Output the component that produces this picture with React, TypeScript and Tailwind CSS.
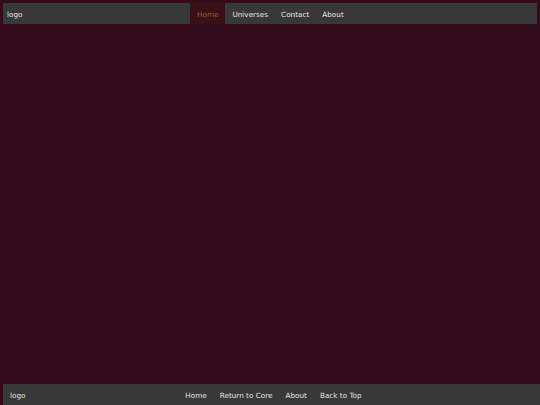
import React from 'react';

const font = { fontFamily: '"DejaVu Sans", Verdana, sans-serif' };

const topLinks = ['Universes', 'Contact', 'About'];
const footLinks = ['Home', 'Return to Core', 'About', 'Back to Top'];

export default function App() {
  return (
    <div
      className="min-h-screen h-[405px] flex flex-col bg-[#330c1c] text-[#e4e4e4] text-[7.25px] leading-none"
      style={font}
    >
      {/* Header */}
      <header className="flex mt-[3px] mx-[3px] h-[21px]">
        <div className="w-[187px] bg-[#383838] flex items-center pl-[4px] pt-[2px]">logo</div>
        <a className="flex items-center px-[7px] pt-[2px] bg-[#3a0f18] text-[#915f2e]">Home</a>
        <nav className="flex-1 flex items-center pt-[2px] pl-[0.5px] bg-[#383838]">
          {topLinks.map((l) => (
            <a key={l} className="px-[6.5px]">
              {l}
            </a>
          ))}
        </nav>
      </header>

      {/* Main */}
      <main className="flex-1" />

      {/* Footer */}
      <footer className="ml-[3px] h-[21px] pt-[2px] bg-[#383838] grid grid-cols-[1fr_auto_1fr] items-center">
        <div className="pl-[7px]">logo</div>
        <nav className="flex items-center ml-[4px]">
          {footLinks.map((l) => (
            <a key={l} className="px-[6.5px]">
              {l}
            </a>
          ))}
        </nav>
        <div />
      </footer>
    </div>
  );
}
